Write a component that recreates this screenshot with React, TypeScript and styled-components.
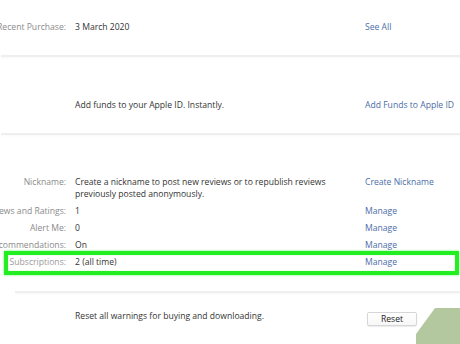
import styled, { createGlobalStyle } from "styled-components";

const GlobalStyle = createGlobalStyle`
  html, body {
    margin: 0;
    padding: 0;
    background: #ffffff;
  }
  body {
    font-family: "Open Sans", "Noto Sans", Arial, sans-serif;
    overflow: hidden;
  }
`;

type RowData = {
  label: string;
  value: string;
  link?: string;
  highlight?: boolean;
};

const Page = styled.div`
  position: relative;
  width: 460px;
  height: 344px;
  overflow: hidden;
  font-size: 8.6px;
  line-height: 12px;
  color: #333333;
`;

const Section = styled.section<{ $top: number; $bottom: number }>`
  display: flex;
  flex-direction: column;
  gap: 5px;
  padding-top: ${({ $top }) => $top}px;
  padding-bottom: ${({ $bottom }) => $bottom}px;
`;

const Divider = styled.div<{ $inset?: number }>`
  height: 2px;
  margin-left: ${({ $inset }) => $inset ?? 1}px;
  background: #efefef;
  box-shadow: 0 1px 2px rgba(0, 0, 0, 0.03);
`;

const Row = styled.div<{ $highlight?: boolean }>`
  position: relative;
  display: grid;
  grid-template-columns: 66px 1fr 95px;
  column-gap: 9px;
  align-items: start;

  ${({ $highlight }) =>
    $highlight &&
    `
    &::after {
      content: "";
      position: absolute;
      left: 4px;
      right: 1px;
      top: -5px;
      bottom: -7px;
      border: 4px solid #22ee22;
      box-shadow: 0 0 2px rgba(34, 238, 34, 0.7),
        inset 0 0 1px rgba(34, 238, 34, 0.7);
      pointer-events: none;
    }
  `}
`;

const Label = styled.div<{ $muted?: boolean }>`
  display: flex;
  justify-content: flex-end;
  white-space: nowrap;
  color: ${({ $muted }) => ($muted ? "#9a9a9a" : "#8a8a8a")};
`;

const Value = styled.div`
  padding-right: 20px;
  color: #333333;
`;

const Link = styled.a`
  color: #4a6da7;
  text-decoration: none;
  white-space: nowrap;
  cursor: pointer;
`;

const ResetButton = styled.button`
  width: 50px;
  height: 14px;
  margin: 2px 0 0 2px;
  padding: 0;
  border: 1px solid #d6d6d6;
  border-radius: 2px;
  background: linear-gradient(#ffffff, #f7f7f7);
  box-shadow: 0 1px 1px rgba(0, 0, 0, 0.08);
  font-family: inherit;
  font-size: 8.6px;
  line-height: 12px;
  color: #222222;
`;

const Corner = styled.svg`
  position: absolute;
  right: 0;
  bottom: 0;
  width: 44px;
  height: 36px;
`;

const profileRows: RowData[] = [
  {
    label: "Nickname:",
    value:
      "Create a nickname to post new reviews or to republish reviews previously posted anonymously.",
    link: "Create Nickname",
  },
  { label: "Reviews and Ratings:", value: "1", link: "Manage" },
  { label: "Alert Me:", value: "0", link: "Manage" },
  { label: "Recommendations:", value: "On", link: "Manage" },
  {
    label: "Subscriptions:",
    value: "2 (all time)",
    link: "Manage",
    highlight: true,
  },
];

export default function App() {
  return (
    <>
      <GlobalStyle />
      <Page>
        <Section $top={21} $bottom={22}>
          <Row>
            <Label>Recent Purchase:</Label>
            <Value>3 March 2020</Value>
            <Link>See All</Link>
          </Row>
        </Section>
        <Divider />

        <Section $top={42} $bottom={22}>
          <Row>
            <Label />
            <Value>Add funds to your Apple ID. Instantly.</Value>
            <Link>Add Funds to Apple ID</Link>
          </Row>
        </Section>
        <Divider />

        <Section $top={41} $bottom={23}>
          {profileRows.map((row) => (
            <Row key={row.label} $highlight={row.highlight}>
              <Label $muted={row.highlight}>{row.label}</Label>
              <Value>{row.value}</Value>
              {row.link && <Link>{row.link}</Link>}
            </Row>
          ))}
        </Section>
        <Divider $inset={15} />

        <Section $top={17} $bottom={0}>
          <Row>
            <Label />
            <Value>Reset all warnings for buying and downloading.</Value>
            <div>
              <ResetButton>Reset</ResetButton>
            </div>
          </Row>
        </Section>

        <Corner viewBox="0 0 44 36">
          <polygon points="19,0 44,0 44,36 0,36 0,26" fill="#b4c8a0" />
        </Corner>
      </Page>
    </>
  );
}
